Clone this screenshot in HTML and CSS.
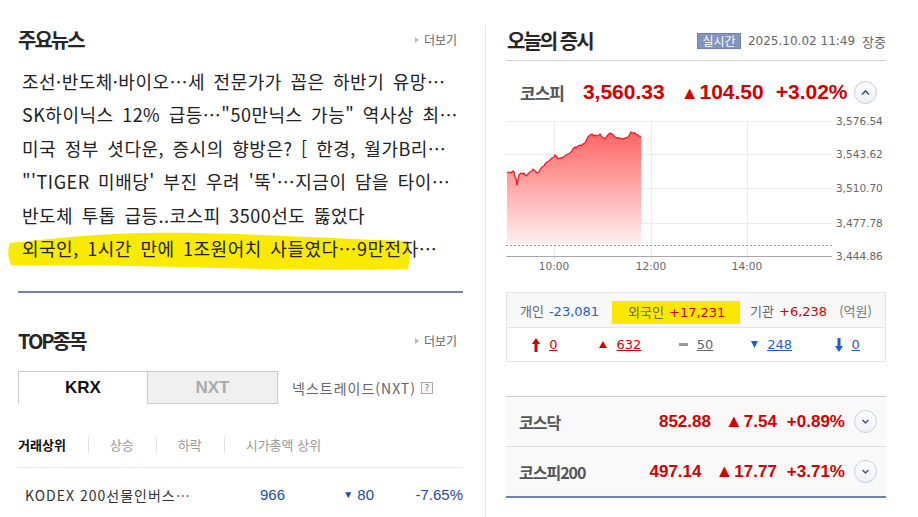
FILE: index.html
```html
<!DOCTYPE html>
<html lang="ko">
<head>
    <meta charset="UTF-8">
    <title>증권 홈</title>
    <link rel="stylesheet" href="styles.css">
</head>
<body>
    <div class="page">
        <!-- 왼쪽: 뉴스 / TOP종목 -->
        <section class="col-left">
            <div class="sec-head">
                <h2>주요뉴스</h2>
                <a class="more" href="#">더보기</a>
            </div>

            <div class="news">
                <svg class="marker" width="404" height="44" viewBox="0 0 404 44">
                    <path d="M3,13 C50,8 110,1 190,3 C270,5 335,9 401,11 Q404,25 401,39 C330,41 250,39 175,37 C105,35 45,36 4,35 Q-1,24 3,13 Z" fill="#f9ea00"/>
                </svg>
                <ul class="news-list">
                    <li><a href="#">조선·반도체·바이오…세 전문가가 꼽은 하반기 유망…</a></li>
                    <li><a href="#">SK하이닉스 12% 급등…"50만닉스 가능" 역사상 최…</a></li>
                    <li><a href="#">미국 정부 셧다운, 증시의 향방은? [ 한경, 월가B리…</a></li>
                    <li><a href="#">"'TIGER 미배당' 부진 우려 '뚝'…지금이 담을 타이…</a></li>
                    <li><a href="#">반도체 투톱 급등..코스피 3500선도 뚫었다</a></li>
                    <li><a href="#">외국인, 1시간 만에 1조원어치 사들였다…9만전자…</a></li>
                </ul>
            </div>

            <div class="sec-head top-head">
                <h2>TOP종목</h2>
                <a class="more" href="#">더보기</a>
            </div>

            <div class="market-tabs">
                <a class="mtab on" href="#">KRX</a>
                <a class="mtab off" href="#">NXT</a>
                <span class="nxt-info">넥스트레이드(NXT)<span class="help">?</span></span>
            </div>

            <ul class="subtabs">
                <li class="on">거래상위</li>
                <li>상승</li>
                <li>하락</li>
                <li>시가총액 상위</li>
            </ul>

            <div class="top-row">
                <span class="name">KODEX 200선물인버스…</span>
                <span class="num">966</span>
                <span class="num"><span class="tri-s">▼</span> 80</span>
                <span class="num">-7.65%</span>
            </div>
        </section>

        <!-- 오른쪽: 오늘의 증시 -->
        <section class="col-right">
            <div class="sec-head market-head">
                <h2>오늘의 증시</h2>
                <div class="stamp">
                    <span class="live">실시간</span>
                    <span class="time">2025.10.02 11:49</span>
                    <span>장중</span>
                </div>
            </div>

            <div class="kospi">
                <strong class="idx-name">코스피</strong>
                <span class="idx-price">3,560.33</span>
                <span class="idx-chg"><span class="tri">▲</span>104.50</span>
                <span class="idx-rate">+3.02%</span>
                <button class="toggle" type="button">
                    <svg width="13" height="11" viewBox="0 0 13 11"><polyline points="3,7.5 6.5,4 10,7.5" fill="none" stroke="#3b5191" stroke-width="1.6"/></svg>
                </button>
            </div>

            <svg class="chart" width="380" height="160" viewBox="0 0 380 160">
                <defs>
                    <linearGradient id="area" x1="0" y1="0" x2="0" y2="1">
                        <stop offset="0" stop-color="#ff6464"/>
                        <stop offset="1" stop-color="#fff0f0"/>
                    </linearGradient>
                </defs>
                <g stroke="#ececec" stroke-width="1">
                    <line x1="0" y1="9.5" x2="326" y2="9.5"/>
                    <line x1="0" y1="42.5" x2="326" y2="42.5"/>
                    <line x1="0" y1="76.5" x2="326" y2="76.5"/>
                    <line x1="0" y1="111.5" x2="326" y2="111.5"/>
                    <line x1="48.5" y1="9" x2="48.5" y2="147"/>
                    <line x1="145.5" y1="9" x2="145.5" y2="147"/>
                    <line x1="241.5" y1="9" x2="241.5" y2="147"/>
                </g>
                <path fill="url(#area)" d="M1,61 L3,60 L5,61 L7,59 L8,60 L9,65 L10,66 L11,73 L12,68 L13,63 L15,61 L17,62 L18,61 L20,64 L22,62 L24,60 L26,59 L27,57 L29,59 L31,61 L33,60 L34,58 L36,55 L38,54 L39,52 L41,50 L43,49 L44,48 L46,46 L48,45 L49,43 L51,45 L52,47 L54,46 L56,46 L57,45 L59,44 L60,43 L62,42 L64,41 L66,39 L67,37 L69,35 L70,36 L72,34 L74,33 L75,34 L77,32 L79,31 L80,29 L82,25 L84,23 L86,22 L88,24 L89,23 L91,24 L93,23 L94,22 L96,25 L98,26 L99,27 L101,24 L102,23 L104,21 L106,22 L107,23 L109,25 L111,26 L112,26 L114,26 L116,27 L117,27 L119,26 L120,26 L122,25 L124,22 L125,20 L127,21 L129,21 L130,22 L132,23 L133,24 L135,25 L135,132 L1,132 Z"/>
                <path fill="none" stroke="#e41e26" stroke-width="1.3" stroke-linejoin="round" d="M1,61 L3,60 L5,61 L7,59 L8,60 L9,65 L10,66 L11,73 L12,68 L13,63 L15,61 L17,62 L18,61 L20,64 L22,62 L24,60 L26,59 L27,57 L29,59 L31,61 L33,60 L34,58 L36,55 L38,54 L39,52 L41,50 L43,49 L44,48 L46,46 L48,45 L49,43 L51,45 L52,47 L54,46 L56,46 L57,45 L59,44 L60,43 L62,42 L64,41 L66,39 L67,37 L69,35 L70,36 L72,34 L74,33 L75,34 L77,32 L79,31 L80,29 L82,25 L84,23 L86,22 L88,24 L89,23 L91,24 L93,23 L94,22 L96,25 L98,26 L99,27 L101,24 L102,23 L104,21 L106,22 L107,23 L109,25 L111,26 L112,26 L114,26 L116,27 L117,27 L119,26 L120,26 L122,25 L124,22 L125,20 L127,21 L129,21 L130,22 L132,23 L133,24 L135,25"/>
                <line x1="0" y1="133.5" x2="326" y2="133.5" stroke="#9a9a9a" stroke-dasharray="2 2"/>
                <line x1="0" y1="144.5" x2="326" y2="144.5" stroke="#a8a8a8"/>
                <g class="axis-label">
                    <text x="330" y="13">3,576.54</text>
                    <text x="330" y="46">3,543.62</text>
                    <text x="330" y="80">3,510.70</text>
                    <text x="330" y="115">3,477.78</text>
                    <text x="330" y="148">3,444.86</text>
                    <text x="48" y="158" text-anchor="middle">10:00</text>
                    <text x="145" y="158" text-anchor="middle">12:00</text>
                    <text x="241" y="158" text-anchor="middle">14:00</text>
                </g>
            </svg>

            <div class="investors">
                <div class="inv-top">
                    <span class="inv">개인<em class="dn">-23,081</em></span>
                    <span class="inv hl">외국인<em class="up">+17,231</em></span>
                    <span class="inv inst">기관<em class="up">+6,238</em></span>
                    <span class="unit">(억원)</span>
                </div>
                <div class="inv-bottom">
                    <a class="cnt up" href="#">
                        <svg width="8" height="14" viewBox="0 0 8 14"><path d="M4,0 L8,6 H5.5 V14 H2.5 V6 H0 Z" fill="#d40000"/></svg>
                        <span class="n">0</span>
                    </a>
                    <a class="cnt up" href="#">
                        <svg width="8" height="7" viewBox="0 0 8 7"><path d="M4,0 L8,7 H0 Z" fill="#d40000"/></svg>
                        <span class="n">632</span>
                    </a>
                    <a class="cnt flat" href="#">
                        <svg width="9" height="3" viewBox="0 0 9 3"><rect width="9" height="3" fill="#999"/></svg>
                        <span class="n">50</span>
                    </a>
                    <a class="cnt dn" href="#">
                        <svg width="7" height="7" viewBox="0 0 7 7"><path d="M0,0 H7 L3.5,7 Z" fill="#1d5fc6"/></svg>
                        <span class="n">248</span>
                    </a>
                    <a class="cnt dn" href="#">
                        <svg width="8" height="14" viewBox="0 0 8 14"><path d="M2.5,0 H5.5 V8 H8 L4,14 L0,8 H2.5 Z" fill="#1d5fc6"/></svg>
                        <span class="n">0</span>
                    </a>
                </div>
            </div>

            <ul class="idx-list">
                <li>
                    <strong>코스닥</strong>
                    <span class="vals">
                        <span>852.88</span>
                        <span class="chg"><span class="tri">▲</span>7.54</span>
                        <span class="rate">+0.89%</span>
                    </span>
                    <button class="toggle" type="button">
                        <svg width="13" height="11" viewBox="0 0 13 11"><polyline points="3.5,4 6.5,7 9.5,4" fill="none" stroke="#3b5191" stroke-width="1.4"/></svg>
                    </button>
                </li>
                <li>
                    <strong>코스피200</strong>
                    <span class="vals">
                        <span>497.14</span>
                        <span class="chg"><span class="tri">▲</span>17.77</span>
                        <span class="rate">+3.71%</span>
                    </span>
                    <button class="toggle" type="button">
                        <svg width="13" height="11" viewBox="0 0 13 11"><polyline points="3.5,4 6.5,7 9.5,4" fill="none" stroke="#3b5191" stroke-width="1.4"/></svg>
                    </button>
                </li>
            </ul>
        </section>
    </div>
</body>
</html>
```

FILE: styles.css
```css
* {
    box-sizing: border-box;
}

body {
    margin: 0;
    background: #fff;
    color: #333;
    font-family: "Noto Sans CJK KR", "Noto Sans", sans-serif;
}

ul {
    list-style: none;
    margin: 0;
    padding: 0;
}

a {
    color: inherit;
    text-decoration: none;
}

h2 {
    margin: 0;
}

.page {
    display: flex;
    align-items: flex-start;
    width: 918px;
    padding-left: 18px;
}

/* ---------- left column ---------- */

.col-left {
    width: 445px;
    padding-top: 28px;
}

.sec-head {
    display: flex;
    justify-content: space-between;
    align-items: center;
}

.sec-head h2 {
    font-size: 20px;
    line-height: 24px;
    letter-spacing: -2px;
    color: #262626;
}

.more {
    display: flex;
    align-items: center;
    margin-right: 6px;
    font-size: 12px;
    line-height: 24px;
    color: #666;
}

.more::before {
    content: "";
    margin-right: 5px;
    border-left: 4px solid #bbb;
    border-top: 3px solid transparent;
    border-bottom: 3px solid transparent;
}

.news {
    position: relative;
    margin-top: 13px;
    padding-bottom: 26px;
    border-bottom: 2px solid #7083b0;
}

.marker {
    position: absolute;
    left: -11px;
    top: 165px;
}

.news-list li {
    position: relative;
    padding-left: 4px;
    font-size: 18px;
    line-height: 33.4px;
    letter-spacing: 0.5px;
    word-spacing: 3px;
    color: #222;
    white-space: nowrap;
}

.top-head {
    margin-top: 36px;
}

.market-tabs {
    display: flex;
    align-items: center;
    margin-top: 18px;
}

.mtab {
    display: flex;
    align-items: center;
    justify-content: center;
    height: 33px;
    font-family: "Liberation Sans", Arial, sans-serif;
    font-size: 17px;
    font-weight: bold;
}

.mtab.on {
    width: 129px;
    border-top: 1px solid #ccc;
    border-left: 1px solid #ccc;
    color: #111;
}

.mtab.off {
    width: 131px;
    border: 1px solid #ccc;
    background: #f0f0f0;
    color: #aaa;
}

.nxt-info {
    display: flex;
    align-items: center;
    margin-left: 14px;
    font-size: 14px;
    letter-spacing: 1px;
    color: #666;
}

.help {
    display: inline-block;
    width: 12px;
    height: 12px;
    margin-left: 5px;
    border: 1px solid #aaa;
    background: #f7f7f7;
    font-size: 9px;
    line-height: 10px;
    text-align: center;
    letter-spacing: 0;
    color: #777;
}

.subtabs {
    display: flex;
    margin-top: 33px;
    padding-bottom: 14px;
    border-bottom: 1px solid #e5e5e5;
    font-size: 13px;
    line-height: 16px;
    color: #999;
}

.subtabs li + li {
    margin-left: 22px;
    padding-left: 21px;
    border-left: 1px solid #e3e3e3;
}

.subtabs li.on {
    font-weight: bold;
    color: #111;
}

.top-row {
    display: grid;
    grid-template-columns: 182px 85px 89px 89px;
    padding-top: 16px;
    line-height: 22px;
}

.top-row .name {
    padding-left: 7px;
    font-size: 14px;
    letter-spacing: 1px;
    color: #333;
}

.top-row .num {
    text-align: right;
    font-family: "Liberation Sans", Arial, sans-serif;
    font-size: 15px;
    color: #1c4aa8;
}

.tri-s {
    font-size: 10px;
    vertical-align: 2px;
}

/* ---------- right column ---------- */

.col-right {
    width: 401px;
    height: 492px;
    margin-top: 25px;
    margin-left: 22px;
    padding-left: 20px;
    border-left: 1px solid #e6e6e6;
}

.market-head {
    padding: 4px 0 7px 1px;
    border-bottom: 1px solid #d5d5d5;
}

.stamp {
    display: flex;
    align-items: center;
    font-size: 13px;
    color: #666;
}

.live {
    width: 44px;
    margin-right: 7px;
    border: 1px solid #7084b3;
    background: #8193bf;
    color: #fff;
    font-size: 12px;
    line-height: 14px;
    text-align: center;
}

.time {
    margin-right: 7px;
    font-family: "DejaVu Sans", sans-serif;
    font-size: 12px;
}

.kospi {
    display: flex;
    align-items: center;
    height: 24px;
    margin-top: 19px;
    padding: 0 9px 0 14px;
}

.idx-name {
    font-size: 17px;
    letter-spacing: -1px;
    color: #555;
}

.idx-price,
.idx-chg,
.idx-rate {
    font-family: "Liberation Sans", Arial, sans-serif;
    font-size: 21px;
    font-weight: bold;
    color: #d40000;
}

.idx-price {
    margin-left: 19px;
}

.idx-chg {
    margin-left: 16px;
}

.idx-rate {
    margin-left: 12px;
}

.tri {
    font-size: 18px;
    line-height: 1;
    margin-right: 1px;
}

.toggle {
    display: flex;
    align-items: center;
    justify-content: center;
    width: 23px;
    height: 23px;
    margin-left: auto;
    padding: 0;
    border: 1px solid #c8cde0;
    border-radius: 50%;
    background: linear-gradient(#fff, #edf0f6);
}

.chart {
    display: block;
    margin-top: 8px;
}

.axis-label text {
    font-family: "DejaVu Sans", sans-serif;
    font-size: 10.5px;
    fill: #666;
}

.investors {
    margin-top: 20px;
    border: 1px solid #e5e5e5;
}

.inv-top {
    display: flex;
    height: 35px;
    padding: 8px 0 0 13px;
    border-bottom: 1px solid #e5e5e5;
    background: #f8f8f8;
    font-size: 13px;
    line-height: 19px;
    color: #666;
}

.inv em {
    margin-left: 5px;
    font-style: normal;
    font-family: "DejaVu Sans", sans-serif;
    font-size: 13px;
}

.inv.hl {
    width: 128px;
    height: 23px;
    margin-left: 13px;
    padding-left: 16px;
    background: #fce700;
    line-height: 22px;
}

.inv.inst {
    margin-left: 10px;
}

.unit {
    margin-left: 12px;
    color: #777;
}

.up {
    color: #d40000;
}

.dn {
    color: #1d5fc6;
}

.flat {
    color: #666;
}

.inv-bottom {
    display: flex;
    align-items: center;
    height: 33px;
}

.cnt {
    flex: 1;
    display: flex;
    align-items: center;
    justify-content: center;
    gap: 9px;
    font-family: "DejaVu Sans", sans-serif;
    font-size: 13px;
}

.cnt .n {
    text-decoration: underline;
}

.idx-list {
    margin-top: 34px;
    border-top: 1px solid #ccc;
    border-bottom: 2px solid #7083b0;
}

.idx-list li {
    display: flex;
    align-items: center;
    height: 49px;
    padding: 0 9px 0 13px;
    background: #f9f9f9;
}

.idx-list li + li {
    height: 50px;
    border-top: 1px solid #dcdcdc;
}

.idx-list strong {
    font-size: 16px;
    letter-spacing: -1px;
    color: #555;
}

.vals {
    display: flex;
    align-items: center;
    margin-left: auto;
    font-family: "Liberation Sans", Arial, sans-serif;
    font-size: 17px;
    font-weight: bold;
    color: #d40000;
}

.vals .chg {
    margin-left: 14px;
}

.vals .rate {
    margin-left: 10px;
}

.idx-list .toggle {
    margin-left: 9px;
}
```
